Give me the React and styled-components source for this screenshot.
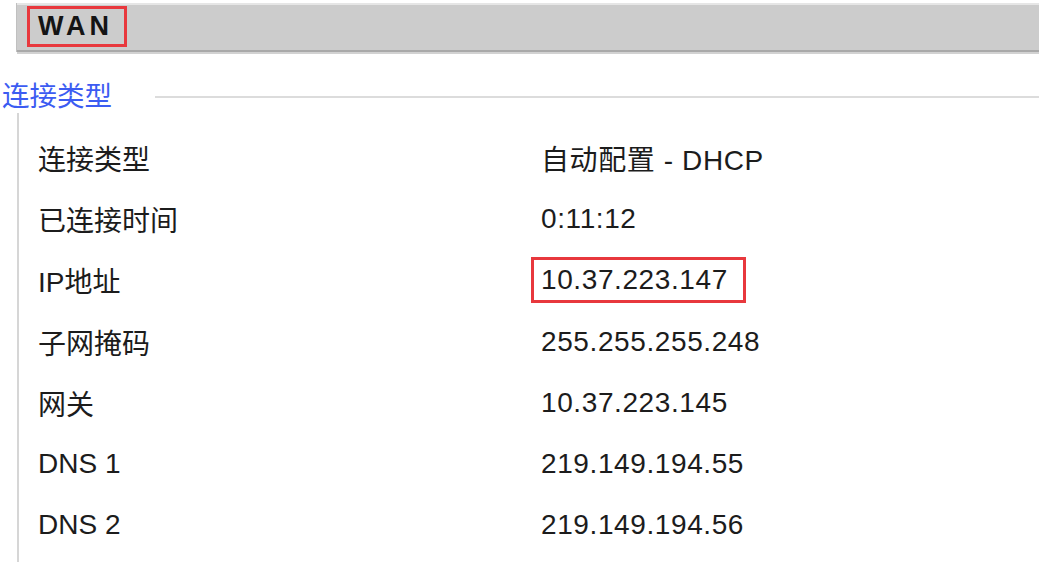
import styled, { createGlobalStyle } from 'styled-components'

const GlobalStyle = createGlobalStyle`
  html, body {
    margin: 0;
    padding: 0;
    background: #ffffff;
  }
  body {
    font-family: "Liberation Sans", "Noto Sans CJK SC", sans-serif;
    color: #1c1c1c;
    overflow: hidden;
  }
`

const Page = styled.div`
  width: 1039px;
  height: 562px;
  padding-top: 3px;
  box-sizing: border-box;
  overflow: hidden;
`

const TitleBar = styled.div`
  margin-left: 17px;
  height: 44px;
  padding-top: 1px;
  background: #cccccc;
  border-top: 2px solid #e6e6e6;
  border-bottom: 2px solid #a9a9a9;
  box-shadow: 0 2px 0 #d2d2d2, -1px 0 0 #c0c0c0;
  display: flex;
  align-items: flex-start;
`

const TitleBox = styled.div`
  margin-left: 10px;
  width: 100px;
  height: 41px;
  box-sizing: border-box;
  border: 3px solid #e8383d;
  padding-left: 8px;
  display: flex;
  align-items: center;
  font-size: 27px;
  font-weight: bold;
  letter-spacing: 4px;
  color: #141414;
`

const Legend = styled.div`
  display: flex;
  align-items: center;
  margin-top: 30px;
  height: 30px;
`

const LegendText = styled.span`
  padding-left: 2px;
  font-size: 27.5px;
  line-height: 30px;
  color: #3c5cf2;
  white-space: nowrap;
`

const LegendRule = styled.div`
  flex: 1;
  margin-left: 43px;
  height: 2px;
  background: #dcdcdc;
`

const Fieldset = styled.div`
  margin: 1px 0 0 17px;
  padding: 14px 0 0 19px;
  border-left: 2px solid #d6d6d6;
  height: 460px;
  box-sizing: border-box;
`

const Row = styled.div`
  display: grid;
  grid-template-columns: 503px 1fr;
  align-items: center;
  height: 61.3px;
  font-size: 28px;
`

const Label = styled.div`
  white-space: nowrap;
`

const Value = styled.div`
  white-space: nowrap;
  letter-spacing: 0.6px;
`

const Marked = styled.span`
  display: inline-flex;
  align-items: center;
  box-sizing: border-box;
  height: 46px;
  width: 215px;
  margin-left: -10px;
  padding-left: 7px;
  border: 3px solid #e8383d;
`

const rows = [
  { label: '连接类型', value: '自动配置 - DHCP' },
  { label: '已连接时间', value: '0:11:12' },
  { label: 'IP地址', value: '10.37.223.147', marked: true },
  { label: '子网掩码', value: '255.255.255.248' },
  { label: '网关', value: '10.37.223.145' },
  { label: 'DNS 1', value: '219.149.194.55' },
  { label: 'DNS 2', value: '219.149.194.56' },
]

export default function App() {
  return (
    <Page>
      <GlobalStyle />
      <TitleBar>
        <TitleBox>WAN</TitleBox>
      </TitleBar>
      <Legend>
        <LegendText>连接类型</LegendText>
        <LegendRule />
      </Legend>
      <Fieldset>
        {rows.map((r) => (
          <Row key={r.label}>
            <Label>{r.label}</Label>
            <Value>{r.marked ? <Marked>{r.value}</Marked> : r.value}</Value>
          </Row>
        ))}
      </Fieldset>
    </Page>
  )
}
